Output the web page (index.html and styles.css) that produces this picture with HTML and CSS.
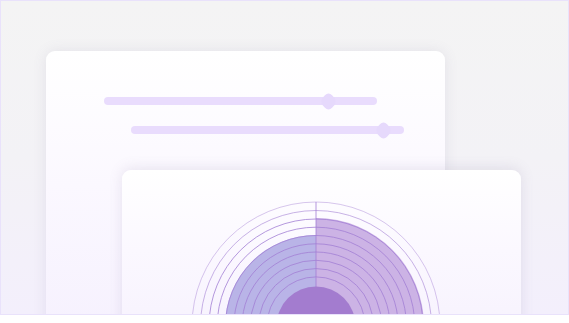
FILE: index.html
```html
<!DOCTYPE html>
<html>
<head>
    <title>Sliders and radial chart</title>
    <meta charset="UTF-8">
    <meta name="viewport" content="width=device-width, initial-scale=1.0">
    <link rel="stylesheet" href="styles.css">
</head>
<body>
<div class="stage">
    <div class="card back">
        <div class="sliders">
            <div class="track first">
                <span class="thumb" style="left: 224px"></span>
            </div>
            <div class="track second">
                <span class="thumb" style="left: 252px"></span>
            </div>
        </div>
    </div>
    <div class="card front">
        <svg class="chart" width="399" height="150" viewBox="0 0 399 150">
            <path d="M194 156 m-91 0 a91 91 0 0 1 91 -91 L194 156 Z" fill="#b9b4e7"/>
            <path d="M194 156 L194 48 a108 108 0 0 1 108 108 Z" fill="#ccb3e5"/>
            <g fill="none" stroke="#a27fd4" stroke-width="0.8">
                <circle cx="194" cy="156" r="124" stroke-opacity="0.55"/>
                <circle cx="194" cy="156" r="115.5" stroke-opacity="0.75"/>
                <circle cx="194" cy="156" r="107"/>
                <circle cx="194" cy="156" r="98.8"/>
                <circle cx="194" cy="156" r="90.5"/>
                <circle cx="194" cy="156" r="82.2"/>
                <circle cx="194" cy="156" r="74"/>
                <circle cx="194" cy="156" r="65.7"/>
                <circle cx="194" cy="156" r="57.4"/>
                <circle cx="194" cy="156" r="49.1"/>
                <line x1="194" y1="32" x2="194" y2="120"/>
            </g>
            <circle cx="194" cy="156" r="39.5" fill="#a37ccf"/>
        </svg>
    </div>
</div>
</body>
</html>
```

FILE: styles.css
```css
body {
    margin: 0;
    background-color: #ffffff;
}

.stage {
    position: relative;
    box-sizing: border-box;
    width: 569px;
    height: 315px;
    padding: 50px 0 0 45px;
    overflow: hidden;
    border: 1px solid #e9e2fb;
    background: linear-gradient(180deg, #f4f4f4 0%, #f3f2f6 50%, #f3effc 100%);
}

.card {
    box-sizing: border-box;
    width: 399px;
    border-radius: 9px;
}

.back {
    height: 300px;
    background: linear-gradient(180deg, #ffffff 0%, #fbf8ff 45%, #f5f0fe 100%);
    box-shadow: 0 0 14px rgba(110, 100, 140, 0.12);
}

.sliders {
    display: flex;
    flex-direction: column;
    gap: 21px;
    padding-top: 46px;
}

.track {
    position: relative;
    width: 273px;
    height: 8px;
    border-radius: 4px;
    background-color: #e9dcfd;
}
.track.first {
    margin-left: 58px;
}
.track.second {
    margin-left: 85px;
}

.thumb {
    position: absolute;
    top: -2.5px;
    width: 13px;
    height: 13px;
    margin-left: -6.5px;
    border-radius: 5px;
    background-color: #e6d9fc;
    transform: scaleY(1.12) rotate(45deg);
}

.front {
    position: absolute;
    left: 121px;
    top: 169px;
    height: 200px;
    background: linear-gradient(180deg, #ffffff 0%, #fbf8ff 40%, #f5f0fd 100%);
    box-shadow: 0 -2px 14px rgba(110, 100, 140, 0.14);
}

.chart {
    display: block;
}
```
